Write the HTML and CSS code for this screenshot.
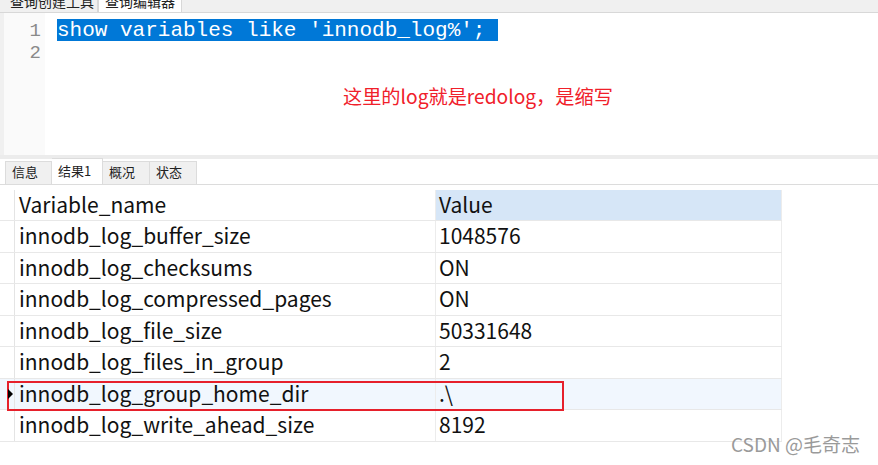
FILE: index.html
```html
<!DOCTYPE html>
<html lang="zh">
<head>
<meta charset="utf-8">
<title>查询编辑器</title>
<link rel="stylesheet" href="styles.css">
</head>
<body>
<div class="app">
  <div class="topbar">
    <div class="ttab">查询创建工具</div>
    <div class="ttab active">查询编辑器</div>
  </div>
  <div class="editor">
    <div class="gutter">
      <div class="ln">1</div>
      <div class="ln">2</div>
    </div>
    <div class="code">
      <div class="line"><span class="sel">show variables like 'innodb_log%'; </span></div>
      <div class="line"></div>
    </div>
    <div class="note">这里的log就是redolog，是缩写</div>
  </div>
  <div class="sep"></div>
  <div class="rtabs">
    <div class="rtab">信息</div>
    <div class="rtab active">结果1</div>
    <div class="rtab">概况</div>
    <div class="rtab">状态</div>
  </div>
  <div class="results">
    <div class="grid">
      <div class="row head"><div class="ind"></div><div class="c1">Variable_name</div><div class="c2 hl">Value</div></div>
      <div class="row"><div class="ind"></div><div class="c1">innodb_log_buffer_size</div><div class="c2">1048576</div></div>
      <div class="row"><div class="ind"></div><div class="c1">innodb_log_checksums</div><div class="c2">ON</div></div>
      <div class="row"><div class="ind"></div><div class="c1">innodb_log_compressed_pages</div><div class="c2">ON</div></div>
      <div class="row"><div class="ind"></div><div class="c1">innodb_log_file_size</div><div class="c2">50331648</div></div>
      <div class="row"><div class="ind"></div><div class="c1">innodb_log_files_in_group</div><div class="c2">2</div></div>
      <div class="row current"><div class="ind"><span class="tri"></span></div><div class="c1">innodb_log_group_home_dir</div><div class="c2">.\</div></div>
      <div class="row"><div class="ind"></div><div class="c1">innodb_log_write_ahead_size</div><div class="c2">8192</div></div>
    </div>
    <div class="mark"></div>
    <div class="wm">CSDN @毛奇志</div>
  </div>
</div>
</body>
</html>
```
FILE: styles.css
```css
* { box-sizing: border-box; }
html, body { margin: 0; padding: 0; }
body {
  width: 878px;
  height: 465px;
  overflow: hidden;
  background: #ffffff;
  font-family: "Noto Sans CJK SC", "Noto Sans", sans-serif;
}
.app { display: flex; flex-direction: column; height: 465px; }

.topbar {
  height: 13px;
  background: #f0f0f0;
  border-bottom: 1px solid #d8d8d8;
  display: flex;
  padding-left: 7px;
  overflow: hidden;
  flex: none;
}
.ttab {
  font-size: 14px;
  line-height: 16px;
  margin-top: -7px;
  padding: 0 3px 0 3px;
  color: #222;
  height: 20px;
  border-right: 1px solid #d8d8d8;
}
.ttab.active { background: #ffffff; padding: 0 6px 0 6px; border-left: 1px solid #d8d8d8; }

.editor {
  position: relative;
  height: 142px;
  display: flex;
  flex: none;
}
.gutter {
  width: 45px;
  background: #fafafa;
  border-left: 4px solid #f0f0f0;
  padding-top: 7px;
  flex: none;
}
.ln {
  height: 22px;
  line-height: 22px;
  text-align: right;
  padding-right: 4px;
  font-family: "Liberation Mono", monospace;
  font-size: 19px;
  color: #8a8a8a;
}
.code { padding-top: 6px; padding-left: 12px; }
.line {
  height: 22px;
  line-height: 23px;
  font-family: "Liberation Mono", monospace;
  font-size: 21px;
  white-space: pre;
  color: #000;
}
.sel { background: #0078d7; color: #ffffff; display: inline-block; height: 22px; }
.note {
  position: absolute;
  left: 343px;
  top: 70px;
  font-size: 19.2px;
  line-height: 26px;
  color: #f0202a;
}

.sep { height: 4px; background: #ececec; flex: none; }

.rtabs {
  height: 26px;
  display: flex;
  align-items: flex-end;
  padding-left: 5px;
  border-bottom: 1px solid #dcdcdc;
  flex: none;
}
.rtab {
  height: 23px;
  width: 47px;
  background: #f0f0f0;
  border: 1px solid #dcdcdc;
  border-bottom: none;
  border-left: none;
  font-size: 13px;
  line-height: 20px;
  padding-left: 6px;
  color: #222;
}
.rtab:first-child { border-left: 1px solid #dcdcdc; }
.rtab.active { background: #ffffff; height: 26px; width: 51px; line-height: 24px; }

.results { position: relative; flex: 1; padding-top: 5px; }
.grid { width: 782px; }
.row {
  display: flex;
  height: 31.5px;
  border-bottom: 1px solid #e8e8e8;
  font-size: 21px;
  line-height: 29px;
  color: #111;
}
.row.head { height: 31px; }
.ind {
  width: 15px;
  flex: none;
  border-right: 1px solid #e4e4e4;
  background: #ffffff;
  position: relative;
}
.c1 { width: 421px; flex: none; padding-left: 4px; border-right: 1px solid #ececec; white-space: nowrap; }
.c2 { width: 346px; flex: none; padding-left: 3px; border-right: 1px solid #ececec; }
.hl { background: #d6e6f7; }
.current { background: #f1f7fe; }
.current .ind { background: #f1f7fe; }
.tri {
  position: absolute;
  left: 8px;
  top: 10px;
  z-index: 2;
  width: 0;
  height: 0;
  border-top: 5px solid transparent;
  border-bottom: 5px solid transparent;
  border-left: 5px solid #000;
}
.mark {
  position: absolute;
  left: 7px;
  top: 196px;
  width: 557px;
  height: 30px;
  border: 2px solid #e6202b;
}
.wm {
  position: absolute;
  left: 731px;
  top: 245px;
  font-size: 19px;
  color: #9a9a9a;
  font-family: "Noto Sans CJK SC", sans-serif;
}
```
